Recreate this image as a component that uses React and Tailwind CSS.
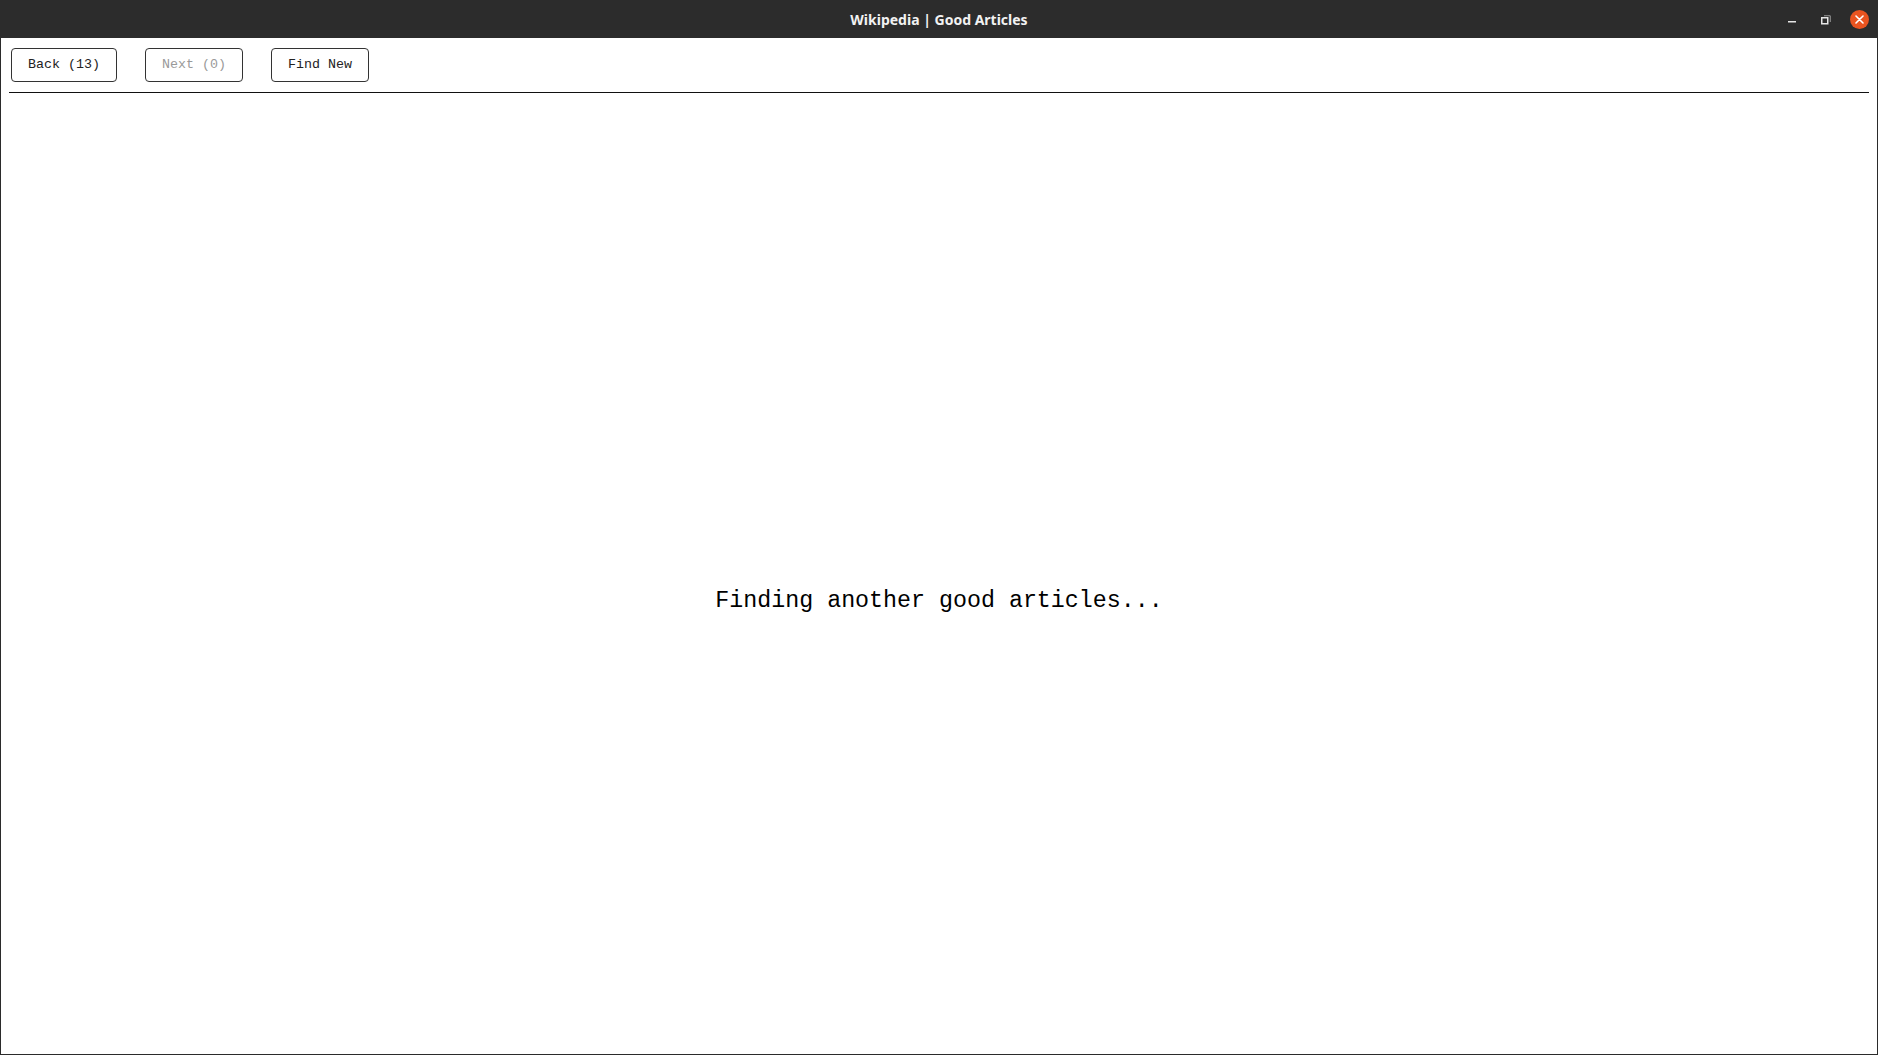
import { useState } from 'react'

const mono = { fontFamily: '"Liberation Mono", "DejaVu Sans Mono", monospace' }

function TitleBar() {
  return (
    <div className="relative h-[38px] bg-[#2c2c2c] flex items-center justify-center shrink-0">
      <span className="text-[14px] font-bold text-[#f2f2f2]" style={{ fontFamily: '"Noto Sans", "DejaVu Sans", sans-serif' }}>
        Wikipedia | Good Articles
      </span>
      {/* window controls */}
      <div className="absolute right-0 top-0 h-full flex items-center">
        <svg width="10" height="10" viewBox="0 0 10 10" className="mr-[24px] mt-[2px]">
          <rect x="1" y="6" width="8" height="1.5" fill="#e6e6e6" />
        </svg>
        <svg width="10" height="10" viewBox="0 0 10 10" className="mr-[19px] mt-[1px]">
          <rect x="0.75" y="2.75" width="6" height="6" fill="none" stroke="#e6e6e6" strokeWidth="1.5" />
          <path d="M3 0.75 H9.25 V7" fill="none" stroke="#9a9a9a" strokeWidth="1" />
        </svg>
        <div className="w-[19px] h-[19px] rounded-full bg-[#e95420] flex items-center justify-center mr-[9px] mt-[1px]">
          <svg width="9" height="9" viewBox="0 0 9 9">
            <path d="M1 1 L8 8 M8 1 L1 8" stroke="#fff" strokeWidth="1.6" strokeLinecap="round" />
          </svg>
        </div>
      </div>
    </div>
  )
}

function NavButton({ label, disabled, onClick }) {
  return (
    <button
      onClick={onClick}
      disabled={disabled}
      className={`h-[34px] px-[16px] border border-[#333] rounded-[4px] bg-white text-[13.33px] ${
        disabled ? 'text-[#9a9a9a]' : 'text-[#222]'
      }`}
      style={mono}
    >
      {label}
    </button>
  )
}

export default function App() {
  const [back, setBack] = useState(13)
  const [next, setNext] = useState(0)

  return (
    <div className="h-screen flex flex-col bg-white overflow-hidden">
      <TitleBar />
      <div className="flex-1 border-l border-r border-b border-[#2b2b2b] px-[8px]">
        {/* Toolbar */}
        <div className="flex items-center gap-[28px] mt-[10px] pl-[2px]">
          <NavButton label={`Back (${back})`} onClick={() => { setBack(b => Math.max(0, b - 1)); setNext(n => n + 1) }} disabled={back === 0} />
          <NavButton label={`Next (${next})`} onClick={() => { setNext(n => n - 1); setBack(b => b + 1) }} disabled={next === 0} />
          <NavButton label="Find New" />
        </div>
        <div className="h-px bg-[#111] mt-[10px]" />

        {/* Loading */}
        <p className="mt-[495px] text-center text-[23.3px] leading-[27px] text-black" style={mono}>
          Finding another good articles...
        </p>
      </div>
    </div>
  )
}
